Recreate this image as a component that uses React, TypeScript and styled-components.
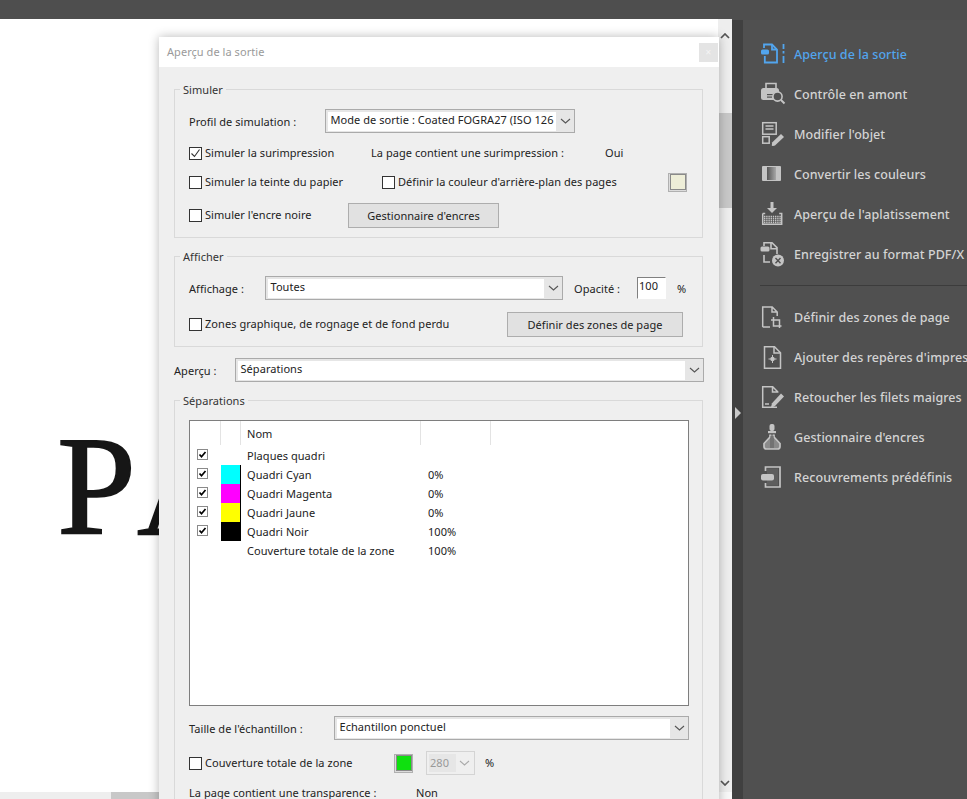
import React from 'react';
import styled, { createGlobalStyle } from 'styled-components';

const Global = createGlobalStyle`
  html, body { margin: 0; padding: 0; background: #4f4f4f; }
  * { box-sizing: border-box; }
`;

const uiFont = `"Noto Sans", "Open Sans", "Liberation Sans", sans-serif`;

const Shell = styled.div`
  width: 967px; height: 799px; overflow: hidden; background: #4e4e4e;
  display: flex; flex-direction: column; font-family: ${uiFont};
`;
const TopBar = styled.div`height: 19px; flex: none; background: #4e4e4e;`;
const Main = styled.div`flex: 1; display: flex; min-height: 0;`;
const Workspace = styled.div`
  position: relative; width: 732px; flex: none; display: flex; flex-direction: column;
`;
const ViewRow = styled.div`flex: 1; display: flex; min-height: 0;`;
const PageArea = styled.div`
  flex: 1; background: #fff; overflow: hidden; padding: 387px 0 0 57px;
`;
const PageTitle = styled.div`
  font-family: "Liberation Serif", serif; font-size: 142px; line-height: 160px; color: #161616;
  letter-spacing: 14px; white-space: nowrap; -webkit-text-stroke: 1.6px #161616;
`;
const VScroll = styled.div`
  width: 14px; flex: none; background: #eeeeee; display: flex; flex-direction: column; align-items: center;
  color: #555; padding: 14px 0 6px;
`;
const VThumb = styled.div`width: 13px; height: 95px; margin-top: 74px; background: #c8c8c8;`;
const VSpacer = styled.div`flex: 1;`;
const HScroll = styled.div`height: 7px; flex: none; display: flex; background: #eeeeee;`;
const HThumb = styled.div`width: 608px; margin-left: 111px; background: #c8c8c8;`;
const HCorner = styled.div`width: 13px; background: #f8f8f8;`;

const Dialog = styled.div`
  position: absolute; left: 159px; top: 18px; width: 560px; height: 800px;
  background: #efefef; box-shadow: 0 0 10px rgba(0,0,0,.28);
  color: #222; font-size: 11px; letter-spacing: .05px;
`;
const TitleBar = styled.div`
  height: 30px; background: #fff; display: flex; align-items: center; justify-content: space-between;
  padding: 0 1px 2px 8px; color: #9a9a9a;
`;
const CloseBtn = styled.div`
  width: 19px; height: 19px; margin-top: 2px; background: #e4e4e4; color: #f4f4f4; font-size: 10px;
  display: flex; align-items: center; justify-content: center;
`;
const DialogBody = styled.div`padding: 15px 16px 0 15px;`;
const Group = styled.fieldset`
  margin: 0 0 11px; padding: 0 0 0 14px; border: 1px solid #d9d9d9; min-width: 0;
`;
const Legend = styled.legend`
  margin-left: -9px; padding: 0 3px; line-height: 15px; height: 14px; color: #333;
`;
const Row = styled.div<{ $top?: number; $h?: number; $bottom?: number }>`
  display: flex; align-items: center; height: ${p => p.$h ?? 20}px;
  margin-top: ${p => p.$top ?? 0}px; margin-bottom: ${p => p.$bottom ?? 0}px; white-space: nowrap;
`;
const Label = styled.span<{ $w?: number; $left?: number }>`
  padding-bottom: 2px;
  ${p => p.$w ? `width: ${p.$w}px; flex: none;` : ''}
  ${p => p.$left ? `padding-left: ${p.$left}px;` : ''}
`;
const FieldLabel = styled(Label)`padding-bottom: 0;`;
const CheckLabel = styled.label<{ $w?: number }>`
  display: flex; align-items: center; gap: 3px; ${p => p.$w ? `width: ${p.$w}px; flex: none;` : ''}
`;
const CheckText = styled.span`padding-bottom: 2px;`;
const Box = styled.span`
  width: 13px; height: 13px; flex: none; border: 1px solid #333; background: #fff;
  display: flex; align-items: center; justify-content: center; color: #333;
`;
const SelectBox = styled.div<{ $w: number }>`
  width: ${p => p.$w}px; height: 24px; flex: none; display: flex; align-items: stretch;
  border: 1.5px solid #aaaaaa; background: #e6e6e6; padding: 1.5px 0 1.5px 1.5px;
`;
const SelectValue = styled.div`
  flex: 1; background: #fff; padding: 0 0 4px 3px; display: flex; align-items: center; color: #222; overflow: hidden;
`;
const SelectArrow = styled.div`
  width: 18px; flex: none; display: flex; align-items: center; justify-content: center; color: #555;
`;
const PushButton = styled.div<{ $w: number }>`
  width: ${p => p.$w}px; height: 25px; flex: none; background: #e1e1e1; border: 1.5px solid #adadad;
  padding-bottom: 1px; display: flex; align-items: center; justify-content: center; color: #222;
`;
const Swatch = styled.div<{ $color: string }>`
  width: 19px; height: 19px; flex: none; border: 1px solid #b0b0b0; background: #dcdcdc;
  display: flex; align-items: center; justify-content: center;
  &::after { content: ''; width: 14px; height: 14px; background: ${p => p.$color}; border: 1px solid #8a8a8a; }
`;
const OpacityInput = styled.div`
  width: 29px; height: 22px; flex: none; background: #fff; border: 1.5px solid #fff;
  border-top-color: #808080; border-left-color: #808080; padding-left: 1px; line-height: 15px;
`;
const Spinner = styled.div`
  width: 49px; height: 24px; flex: none; border: 1px solid #d4d4d4; display: flex; padding: 2px;
  color: #999;
`;
const SpinnerValue = styled.div`
  width: 27px; background: #e6e6e6; padding: 0 0 2px 1px; display: flex; align-items: center;
`;
const SpinnerArrow = styled.div`flex: 1; display: flex; align-items: center; justify-content: center; color: #aaa;`;
const List = styled.div`
  width: 500px; height: 286px; margin-top: 13px; background: #fff; border: 1px solid #7e7e7e; color: #222;
`;
const ListRow = styled.div<{ $h: number }>`
  display: grid; grid-template-columns: 31px 20px 180px 70px 1fr; height: ${p => p.$h}px; align-items: stretch;
`;
const HeaderCell = styled.div`
  border-right: 1px solid #e3e3e3; margin-bottom: 1px; padding: 0 0 0 6px; display: flex; align-items: center;
  &:last-child { border-right: none; }
`;
const CheckCell = styled.div`display: flex; align-items: center; padding: 0 0 3px 7px;`;
const MiniBox = styled.span`
  width: 11px; height: 11px; border: 1px solid #8a8a8a; background: #fff; display: flex; align-items: center; justify-content: center; color: #000;
`;
const ColorCell = styled.div<{ $color?: string }>`
  background: ${p => p.$color ?? 'transparent'};
  ${p => p.$color ? 'border-right: 1px solid #000;' : ''}
`;
const TextCell = styled.div`padding: 0 0 1px 6px; display: flex; align-items: center;`;
const PctCell = styled.div`padding: 0 0 1px 7px; display: flex; align-items: center;`;

const Panel = styled.aside`
  flex: 1; display: flex; min-width: 0;
`;
const Strip = styled.div`
  width: 11px; flex: none; background: #404040; display: flex; align-items: center; padding: 7px 0 0 3px; margin-top: 1px;
`;
const StripArrow = styled.div`
  width: 0; height: 0; border-left: 6px solid #c9c9c9; border-top: 6px solid transparent; border-bottom: 6px solid transparent;
`;
const ToolList = styled.div`flex: 1; min-width: 0; background: #505050; padding-top: 14px; overflow: hidden; margin-top: 1px;`;
const Tool = styled.div<{ $active?: boolean }>`
  height: 40px; display: flex; align-items: center; gap: 8px; padding-left: 17px; white-space: nowrap;
  color: ${p => p.$active ? '#52a5ee' : '#d4d4d4'}; font-size: 12.5px; font-weight: 500; letter-spacing: .07px;
`;
const ToolIcon = styled.svg`width: 26px; height: 26px; flex: none; overflow: visible;`;
const Divider = styled.div`height: 1px; margin: 11px 0 11px 17px; background: #3c3c3c;`;

const G = '#c4c4c4';
const B = '#52a5ee';

const Chevron = () => (
  <svg width="11" height="6" viewBox="0 0 11 6" fill="none"><path d="M1 1l4.5 4L10 1" stroke="currentColor" strokeWidth="1.1" /></svg>
);
const BoldChevron = ({ up }: { up?: boolean }) => (
  <svg width="10" height="6" viewBox="0 0 10 6" fill="none"><path d={up ? 'M1 5l4-4 4 4' : 'M1 1l4 4 4-4'} stroke="currentColor" strokeWidth="1.7" /></svg>
);
const Tick = () => (
  <svg width="11" height="11" viewBox="0 0 11 11" fill="none"><path d="M1.5 5.5l3 3 5-7" stroke="currentColor" strokeWidth="1.1" /></svg>
);
const MiniTick = () => (
  <svg width="9" height="9" viewBox="0 0 9 9" fill="none"><path d="M1.5 4.5l2 2.2L7.5 2" stroke="currentColor" strokeWidth="1.7" /></svg>
);

const Icon1 = () => (
  <ToolIcon viewBox="0 0 26 26" fill="none" stroke={B} strokeWidth="1.8">
    <path d="M4 7V3.500h8l5 5v13H4.800V15" />
    <path d="M12 3.500v5h5" />
    <rect x="1" y="8.500" width="8" height="5" rx="1.600" fill={B} stroke="none" />
    <path d="M23.500 3v5M23.500 10v2.500M23.500 15v7" strokeWidth="1.800" />
  </ToolIcon>
);
const Icon2 = () => (
  <ToolIcon viewBox="0 0 26 26" fill="none">
    <path d="M6 7V2.500h10V7" stroke={G} strokeWidth="1.600" />
    <rect x="1" y="7" width="18" height="12" rx="2.500" fill={G} />
    <rect x="7" y="13" width="7" height="1.200" fill="#505050" />
    <rect x="7" y="15.500" width="5" height="1.200" fill="#505050" />
    <circle cx="17.500" cy="15.500" r="4.600" fill="#505050" stroke={G} strokeWidth="1.600" />
    <path d="M21 19l3.500 3.500" stroke={G} strokeWidth="2" />
  </ToolIcon>
);
const Icon3 = () => (
  <ToolIcon viewBox="0 0 26 26" fill="none" stroke={G} strokeWidth="1.500">
    <rect x="2.700" y="1.700" width="13.500" height="11.500" />
    <path d="M5.500 5h8M5.500 8h8" />
    <rect x="2.700" y="15.700" width="6.500" height="6.500" />
    <path d="M13 25l-1.200-.2.3-3.300L21 13l3 3-9 8.500z" fill={G} stroke="none" />
  </ToolIcon>
);
const Icon4 = () => (
  <ToolIcon viewBox="0 0 26 26">
    <defs>
      <linearGradient id="cc" x1="0" x2="1"><stop offset="0" stopColor="#555" /><stop offset="1" stopColor="#a8a8a8" /></linearGradient>
    </defs>
    <rect x="2" y="5" width="19" height="15" rx="1" fill={G} />
    <rect x="7" y="6" width="9" height="13" fill="url(#cc)" />
  </ToolIcon>
);
const Icon5 = () => (
  <ToolIcon viewBox="0 0 26 26" fill="none">
    <path d="M12 1v7" stroke={G} strokeWidth="3" />
    <path d="M7 7h10l-5 5z" fill={G} />
    <path d="M2.700 12.500V23.300h19V12.500h-2.500M2.700 12.500h2.500" stroke={G} strokeWidth="1.500" />
    <path d="M4 15.500h17M4 17.500h17M4 19.500h17M4 21.500h17" stroke={G} strokeWidth="1.500" strokeDasharray="1.400 .8" />
  </ToolIcon>
);
const Icon6 = () => (
  <ToolIcon viewBox="0 0 26 26" fill="none">
    <path d="M4 5V1.700h8l5 5V13" stroke={G} strokeWidth="1.600" />
    <path d="M11 1.700v6h6" stroke={G} strokeWidth="1.600" />
    <rect x="0.500" y="5.500" width="9" height="5" rx="1.500" fill={G} />
    <path d="M4 14v7h6" stroke={G} strokeWidth="1.600" />
    <circle cx="18" cy="19.500" r="6" fill={G} />
    <path d="M15.500 17l5 5.200M20.500 17l-5 5.200" stroke="#505050" strokeWidth="1.400" />
  </ToolIcon>
);
const Icon7 = () => (
  <ToolIcon viewBox="0 0 26 26" fill="none" stroke={G} strokeWidth="1.500">
    <path d="M2.700 23V3h9.500l5 5v4M12 3v5h5M2.700 23H10" />
    <path d="M13.500 13v9h8M11 16h8.500v8" />
  </ToolIcon>
);
const Icon8 = () => (
  <ToolIcon viewBox="0 0 26 26" fill="none" stroke={G} strokeWidth="1.500">
    <path d="M4.500 2.700h10l6 6v15.500h-16z" />
    <path d="M14 3v6h6.500" />
    <circle cx="12.500" cy="15" r="2.200" fill={G} stroke="none" />
    <path d="M12.500 11v8M8.500 15h8" strokeWidth="1" />
  </ToolIcon>
);
const Icon9 = () => (
  <ToolIcon viewBox="0 0 26 26" fill="none" stroke={G} strokeWidth="1.500">
    <path d="M17 23.200H2.700V2.700h10l5 5v1M12.500 3v5h5" />
    <path d="M5 20h4" />
    <path d="M12 23.500l-1-.2 1-4L21 9.500l3 3-9 9.500z" fill={G} stroke="none" />
  </ToolIcon>
);
const Icon10 = () => (
  <ToolIcon viewBox="0 0 26 26" fill="none">
    <rect x="9.500" y="0" width="5" height="7" rx="2" fill={G} />
    <rect x="8" y="7" width="8" height="2.200" fill={G} />
    <path d="M10 10.500v2.500l-6 6.500v3a2.500 2.500 0 0 0 2.500 2.500h11a2.500 2.500 0 0 0 2.500-2.500v-3L14 13v-2.500" stroke={G} strokeWidth="1.700" fill="#8a8a8a" />
    <path d="M11 12v12M13 12v12" stroke="#505050" strokeWidth=".8" />
  </ToolIcon>
);
const Icon11 = () => (
  <ToolIcon viewBox="0 0 26 26" fill="none">
    <path d="M5.500 7V3h14.500v20H5.500v-4" stroke={G} strokeWidth="1.700" />
    <rect x="7" y="4.500" width="11" height="17" fill="#5e5e5e" />
    <rect x="1" y="10" width="13" height="6.500" rx="2" fill={G} />
  </ToolIcon>
);

const topTools: [string, React.FC][] = [
  ['Contrôle en amont', Icon2], ['Modifier l\'objet', Icon3], ['Convertir les couleurs', Icon4],
  ['Aperçu de l\'aplatissement', Icon5], ['Enregistrer au format PDF/X', Icon6],
];
const bottomTools: [string, React.FC][] = [
  ['Définir des zones de page', Icon7], ['Ajouter des repères d\'impression', Icon8],
  ['Retoucher les filets maigres', Icon9], ['Gestionnaire d\'encres', Icon10], ['Recouvrements prédéfinis', Icon11],
];
const seps: [string, string | undefined, string, boolean][] = [
  ['Plaques quadri', undefined, '', true],
  ['Quadri Cyan', '#00ffff', '0%', true],
  ['Quadri Magenta', '#ff00ff', '0%', true],
  ['Quadri Jaune', '#ffff00', '0%', true],
  ['Quadri Noir', '#000000', '100%', true],
  ['Couverture totale de la zone', undefined, '100%', false],
];

const Select = ({ w, value }: { w: number; value: string }) => (
  <SelectBox $w={w}>
    <SelectValue>{value}</SelectValue>
    <SelectArrow><Chevron /></SelectArrow>
  </SelectBox>
);
const Check = ({ checked, w, children }: { checked?: boolean; w?: number; children: React.ReactNode }) => (
  <CheckLabel $w={w}><Box>{checked && <Tick />}</Box><CheckText>{children}</CheckText></CheckLabel>
);

export default function App() {
  return (
    <Shell>
      <Global />
      <TopBar />
      <Main>
        <Workspace>
          <ViewRow>
            <PageArea><PageTitle>PA</PageTitle></PageArea>
            <VScroll>
              <BoldChevron up />
              <VThumb />
              <VSpacer />
              <BoldChevron />
            </VScroll>
          </ViewRow>
          <HScroll><HThumb /><HCorner /></HScroll>
          <Dialog>
            <TitleBar>Aperçu de la sortie<CloseBtn>×</CloseBtn></TitleBar>
            <DialogBody>
              <Group>
                <Legend>Simuler</Legend>
                <Row $top={13} $h={24}>
                  <FieldLabel $w={136}>Profil de simulation :</FieldLabel>
                  <Select w={250} value="Mode de sortie : Coated FOGRA27 (ISO 126" />
                </Row>
                <Row $top={10}>
                  <Check checked w={182}>Simuler la surimpression</Check>
                  <Label $w={234}>La page contient une surimpression :</Label>
                  <Label>Oui</Label>
                </Row>
                <Row $top={9}>
                  <Check w={193}>Simuler la teinte du papier</Check>
                  <Check w={286}>Définir la couleur d'arrière-plan des pages</Check>
                  <Swatch $color="#eeeed8" />
                </Row>
                <Row $top={11} $h={25} $bottom={9}>
                  <Check w={159}>Simuler l'encre noire</Check>
                  <PushButton $w={151}>Gestionnaire d'encres</PushButton>
                </Row>
              </Group>
              <Group>
                <Legend>Afficher</Legend>
                <Row $top={13} $h={24}>
                  <FieldLabel $w={76}>Affichage :</FieldLabel>
                  <Select w={298} value="Toutes" />
                  <FieldLabel $w={74} $left={11}>Opacité :</FieldLabel>
                  <OpacityInput>100</OpacityInput>
                  <FieldLabel $left={11}>%</FieldLabel>
                </Row>
                <Row $top={12} $h={25} $bottom={9}>
                  <Check w={318}>Zones graphique, de rognage et de fond perdu</Check>
                  <PushButton $w={176}>Définir des zones de page</PushButton>
                </Row>
              </Group>
              <Row $h={24} $bottom={11}>
                <FieldLabel $w={61}>Aperçu :</FieldLabel>
                <Select w={469} value="Séparations" />
              </Row>
              <Group>
                <Legend>Séparations</Legend>
                <List>
                  <ListRow $h={25}>
                    <HeaderCell />
                    <HeaderCell />
                    <HeaderCell>Nom</HeaderCell>
                    <HeaderCell />
                    <HeaderCell />
                  </ListRow>
                  {seps.map(([name, color, pct, checked]) => (
                    <ListRow $h={19} key={name}>
                      <CheckCell>{checked && <MiniBox><MiniTick /></MiniBox>}</CheckCell>
                      <ColorCell $color={color} />
                      <TextCell>{name}</TextCell>
                      <PctCell>{pct}</PctCell>
                    </ListRow>
                  ))}
                </List>
                <Row $top={10} $h={24}>
                  <FieldLabel $w={145}>Taille de l'échantillon :</FieldLabel>
                  <Select w={355} value="Echantillon ponctuel" />
                </Row>
                <Row $top={11} $h={24}>
                  <Check w={205}>Couverture totale de la zone</Check>
                  <Swatch $color="#0fe00f" />
                  <Label $w={13} />
                  <Spinner>
                    <SpinnerValue>280</SpinnerValue>
                    <SpinnerArrow><Chevron /></SpinnerArrow>
                  </Spinner>
                  <Label $left={10}>%</Label>
                </Row>
                <Row $top={8}>
                  <Label $w={227}>La page contient une transparence :</Label>
                  <Label>Non</Label>
                </Row>
              </Group>
            </DialogBody>
          </Dialog>
        </Workspace>
        <Panel>
          <Strip><StripArrow /></Strip>
          <ToolList>
            <Tool $active><Icon1 />Aperçu de la sortie</Tool>
            {topTools.map(([t, I]) => <Tool key={t}><I />{t}</Tool>)}
            <Divider />
            {bottomTools.map(([t, I]) => <Tool key={t}><I />{t}</Tool>)}
          </ToolList>
        </Panel>
      </Main>
    </Shell>
  );
}
